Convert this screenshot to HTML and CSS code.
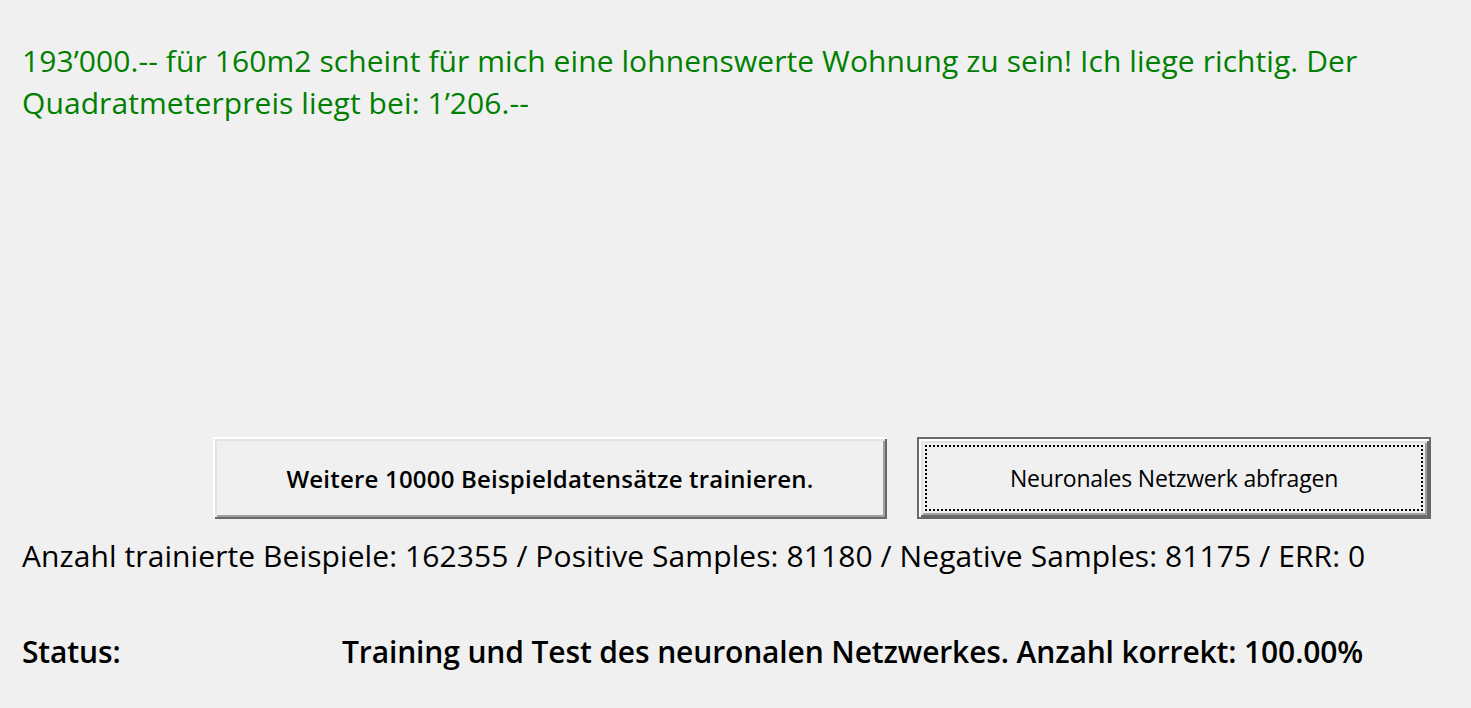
FILE: index.html
```html
<!DOCTYPE html>
<html lang="de">
<head>
<meta charset="utf-8">
<title>Neuronales Netzwerk</title>
<link rel="stylesheet" href="styles.css">
</head>
<body>
<main class="form">
  <p class="result">193’000.-- für 160m2 scheint für mich eine lohnenswerte Wohnung zu sein! Ich liege richtig. Der Quadratmeterpreis liegt bei: 1’206.--</p>
  <div class="actions">
    <button class="btn btn-train" type="button">Weitere 10000 Beispieldatensätze trainieren.</button>
    <button class="btn btn-default" type="button"><span class="focus">Neuronales Netzwerk abfragen</span></button>
  </div>
  <p class="stats">Anzahl trainierte Beispiele: 162355 / Positive Samples: 81180 / Negative Samples: 81175 / ERR: 0</p>
  <div class="status">
    <span class="status-label">Status:</span>
    <span class="status-text">Training und Test des neuronalen Netzwerkes. Anzahl korrekt: 100.00%</span>
  </div>
</main>
</body>
</html>
```
FILE: styles.css
```css
html, body {
  margin: 0;
  padding: 0;
  background: #f0f0f0;
}
body {
  font-family: "Open Sans", "Noto Sans", sans-serif;
  color: #000;
}
.form {
  width: 1471px;
  height: 708px;
  box-sizing: border-box;
  padding: 0 0 0 22px;
  display: flex;
  flex-direction: column;
}
.result {
  margin: 40px 0 0 0;
  width: 1400px;
  font-size: 30px;
  line-height: 42px;
  color: #008000;
  letter-spacing: 0.08px;
}
.actions {
  display: flex;
  gap: 30px;
  margin: 313px 0 0 191px;
}
.btn {
  font-family: "Open Sans", "Noto Sans", sans-serif;
  color: #000;
  background: #f0f0f0;
  height: 82px;
  padding: 0;
  border: none;
  box-shadow: inset 2px 2px #fff, inset -2px -2px #696969, inset 4px 4px #e3e3e3, inset -4px -4px #a0a0a0;
}
.btn-train {
  width: 674px;
  font-size: 24px;
  font-weight: 600;
  letter-spacing: 0.2px;
}
.btn-default {
  width: 514px;
  border: 2px solid #696969;
  padding: 6px;
  display: flex;
  font-size: 23px;
  letter-spacing: -0.2px;
}
.focus {
  flex: 1;
  display: flex;
  align-items: center;
  justify-content: center;
  outline: 2px dotted #000;
  outline-offset: -2px;
}
.stats {
  margin: 16px 0 0 0;
  font-size: 30px;
  line-height: 42px;
  letter-spacing: 0.09px;
}
.status {
  display: flex;
  margin-top: 54px;
  font-size: 30px;
  line-height: 42px;
  font-weight: 600;
  letter-spacing: -0.13px;
}
.status-label {
  width: 320px;
}
```
